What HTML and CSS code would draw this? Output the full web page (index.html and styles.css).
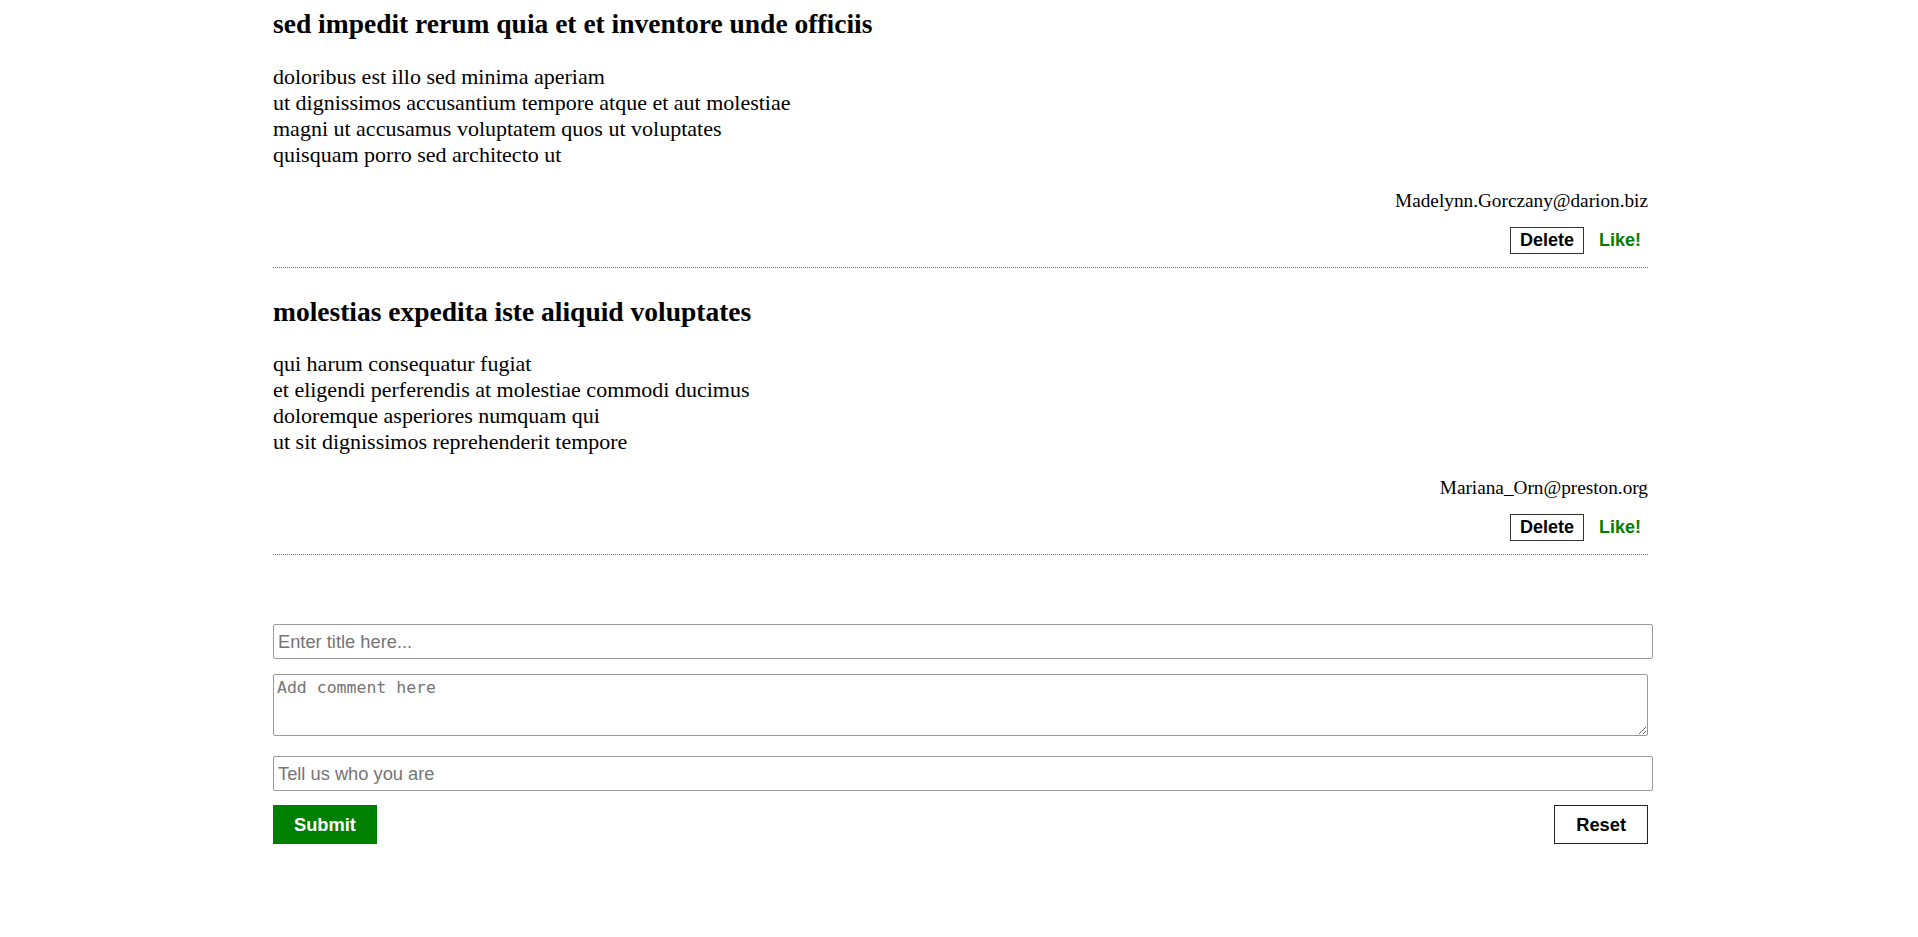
FILE: index.html
```html
<!DOCTYPE html>
<html lang="en">
<head>
<meta charset="utf-8">
<title>Comments</title>
<link rel="stylesheet" href="styles.css">
</head>
<body>
<main class="page">
  <article class="post">
    <h2 class="post-title">sed impedit rerum quia et et inventore unde officiis</h2>
    <p class="post-body">doloribus est illo sed minima aperiam<br>ut dignissimos accusantium tempore atque et aut molestiae<br>magni ut accusamus voluptatem quos ut voluptates<br>quisquam porro sed architecto ut</p>
    <div class="post-author">Madelynn.Gorczany@darion.biz</div>
    <div class="post-actions">
      <button class="btn-delete" type="button">Delete</button>
      <button class="btn-like" type="button">Like!</button>
    </div>
    <hr class="divider">
  </article>
  <article class="post">
    <h2 class="post-title">molestias expedita iste aliquid voluptates</h2>
    <p class="post-body">qui harum consequatur fugiat<br>et eligendi perferendis at molestiae commodi ducimus<br>doloremque asperiores numquam qui<br>ut sit dignissimos reprehenderit tempore</p>
    <div class="post-author">Mariana_Orn@preston.org</div>
    <div class="post-actions">
      <button class="btn-delete" type="button">Delete</button>
      <button class="btn-like" type="button">Like!</button>
    </div>
    <hr class="divider">
  </article>

  <form class="comment-form">
    <input class="field field-title" type="text" placeholder="Enter title here...">
    <textarea class="field-comment" placeholder="Add comment here"></textarea>
    <input class="field field-name" type="text" placeholder="Tell us who you are">
    <div class="form-actions">
      <button class="btn-submit" type="submit">Submit</button>
      <button class="btn-reset" type="reset">Reset</button>
    </div>
  </form>
</main>
</body>
</html>
```

FILE: styles.css
```css
html, body {
  margin: 0;
  padding: 0;
  background: #ffffff;
}

body {
  font-family: "Liberation Serif", "Times New Roman", serif;
  color: #000;
}

.page {
  width: 1375px;
  margin: 0 0 0 273px;
  padding-top: 8px;
}

.post {
  display: flex;
  flex-direction: column;
}

.post + .post {
  margin-top: 28px;
}

.post-title {
  margin: 0;
  font-size: 27.5px;
  font-weight: bold;
  line-height: normal;
}

.post-body {
  margin: 24px 0 0 0;
  font-size: 22px;
  line-height: 26px;
}

.post + .post .post-body {
  margin-top: 23px;
}

.post-author {
  margin-top: 22px;
  text-align: right;
  font-size: 19.25px;
  line-height: normal;
}

.post-actions {
  margin-top: 15px;
  display: flex;
  justify-content: flex-end;
  align-items: center;
  gap: 8px;
}

.btn-delete,
.btn-like {
  font-family: "Liberation Sans", Arial, sans-serif;
  font-weight: bold;
  font-size: 18px;
  height: 27px;
  margin: 0;
  cursor: pointer;
}

.btn-delete {
  padding: 0 9px;
  background: #fff;
  color: #000;
  border: 1px solid #333;
}

.btn-like {
  padding: 0 7px;
  background: transparent;
  border: none;
  color: #008000;
}

.divider {
  margin: 13px 0 0 0;
  border: none;
  border-top: 1px dotted #6f6f6f;
  height: 0;
}

.comment-form {
  margin-top: 69px;
  display: flex;
  flex-direction: column;
  align-items: flex-start;
}

.field {
  box-sizing: border-box;
  width: 1380px;
  height: 35px;
  margin: 0;
  padding: 0 4px;
  font-family: "Liberation Sans", Arial, sans-serif;
  font-size: 18.3px;
  border: 1px solid #9a9a9a;
  border-radius: 2px;
  background: #fff;
}

.field::placeholder,
.field-comment::placeholder {
  color: #757575;
}

.field-comment {
  box-sizing: border-box;
  width: 1375px;
  height: 62px;
  margin: 15px 0 0 0;
  padding: 3px 3px;
  font-family: "DejaVu Sans Mono", "Liberation Mono", monospace;
  font-size: 16.5px;
  border: 1px solid #9a9a9a;
  border-radius: 2px;
  background: #fff;
}

.field-name {
  margin-top: 20px;
}

.form-actions {
  margin-top: 14px;
  width: 1375px;
  display: flex;
  justify-content: space-between;
}

.btn-submit,
.btn-reset {
  font-family: "Liberation Sans", Arial, sans-serif;
  font-weight: bold;
  font-size: 18.3px;
  height: 39px;
  padding: 0 20px;
  margin: 0;
  cursor: pointer;
}

.btn-submit {
  background: #008000;
  color: #fff;
  border: 1px solid #008000;
}

.btn-reset {
  background: #fff;
  color: #000;
  border: 1px solid #222;
  padding: 0 21px;
}
```
